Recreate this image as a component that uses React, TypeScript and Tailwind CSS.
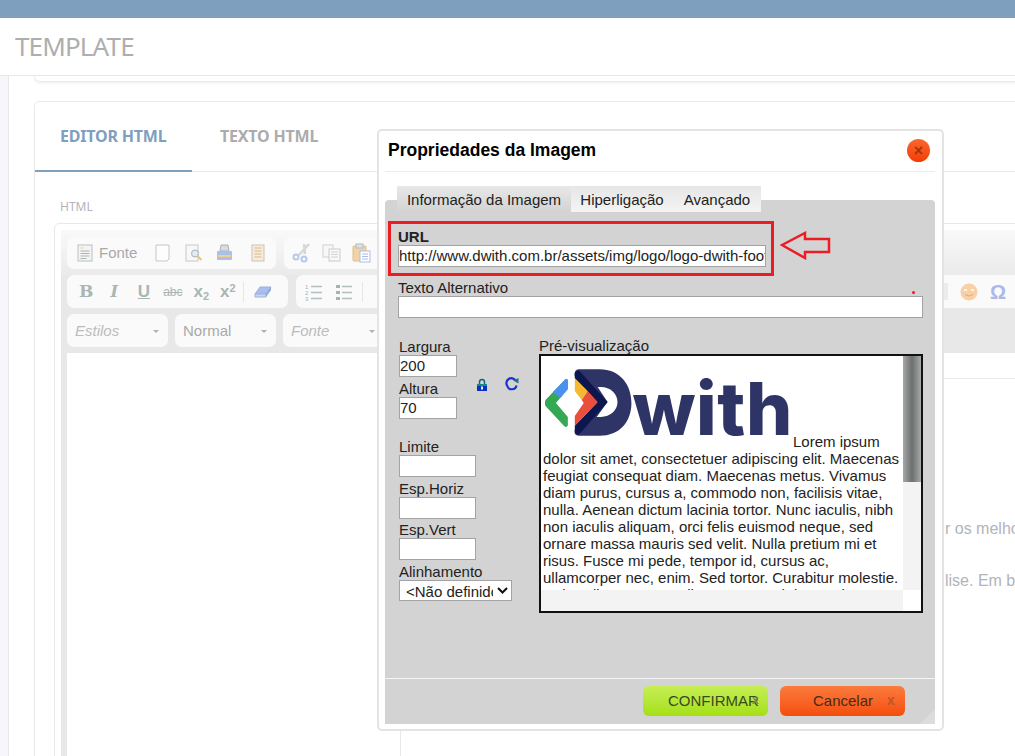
import React from 'react';

const loremText =
  'dolor sit amet, consectetuer adipiscing elit. Maecenas feugiat consequat diam. Maecenas metus. Vivamus diam purus, cursus a, commodo non, facilisis vitae, nulla. Aenean dictum lacinia tortor. Nunc iaculis, nibh non iaculis aliquam, orci felis euismod neque, sed ornare massa mauris sed velit. Nulla pretium mi et risus. Fusce mi pede, tempor id, cursus ac, ullamcorper nec, enim. Sed tortor. Curabitur molestie. Duis velit augue, condimentum at, ultrices a, luctus ut, orci.';

const Sep = () => <span className="w-px h-[20px] bg-[#e6e6e6]" />;

const DocIcon = () => (
  <svg width="16" height="18" viewBox="0 0 16 18" fill="none">
    <rect x="1" y="1" width="14" height="16" fill="#f4f4f4" stroke="#b9c0bd" />
    <path d="M3.5 4h3" stroke="#f2c987" />
    <path d="M3.5 7h9M3.5 9.500h9M3.500 12h9M3.500 14.500h6" stroke="#aeb4b4" />
  </svg>
);
const PageIcon = () => (
  <svg width="15" height="18" viewBox="0 0 15 18" fill="none">
    <path d="M1 1h13v14l-2 2H1z" fill="#fdfdfd" stroke="#c4c8c6" />
  </svg>
);
const PreviewIcon = () => (
  <svg width="19" height="18" viewBox="0 0 19 18" fill="none">
    <rect x="1" y="1" width="12" height="16" fill="#f8f8f8" stroke="#c4c8c6" />
    <circle cx="10" cy="9.500" r="3.500" fill="#e4eaf0" stroke="#a8b0b6" />
    <path d="M12.500 12l4 4" stroke="#eec27f" strokeWidth="2" />
  </svg>
);
const PrintIcon = () => (
  <svg width="17" height="18" viewBox="0 0 17 18" fill="none">
    <path d="M5 1h7l1 6H4z" fill="#d8dbe0" stroke="#aab2ba" />
    <rect x="1" y="7" width="15" height="9" rx="1" fill="#a9c0e8" />
    <rect x="2" y="11" width="13" height="2" fill="#f2cd9b" />
  </svg>
);
const TemplateIcon = () => (
  <svg width="14" height="18" viewBox="0 0 14 18" fill="none">
    <rect x="1" y="1" width="12" height="16" fill="#f6ecdc" stroke="#c9c4b6" />
    <path d="M3.500 4h7M3.500 7h7M3.500 10h7M3.500 13h7" stroke="#e0b982" />
  </svg>
);
const CutIcon = () => (
  <svg width="19" height="20" viewBox="0 0 19 20" fill="none">
    <path d="M17 1L7 12M12 1l1 10" stroke="#d4d8dc" strokeWidth="2.500" />
    <circle cx="4" cy="14" r="2.500" stroke="#b8c8ec" strokeWidth="2" />
    <circle cx="12" cy="16" r="2.500" stroke="#b8c8ec" strokeWidth="2" />
  </svg>
);
const CopyIcon = () => (
  <svg width="19" height="18" viewBox="0 0 19 18" fill="none">
    <rect x="1" y="1" width="10" height="12" fill="#f8f8f8" stroke="#d0d4d2" />
    <rect x="7" y="5" width="11" height="12" fill="#f8f8f8" stroke="#c8ccca" />
    <path d="M9 8h7M9 10.500h7M9 13h7" stroke="#d0d4d2" />
  </svg>
);
const PasteIcon = () => (
  <svg width="19" height="20" viewBox="0 0 19 20" fill="none">
    <rect x="1" y="3" width="13" height="15" rx="1" fill="#f1d3a6" stroke="#e0bd8c" />
    <rect x="4" y="1" width="7" height="4" fill="#dfe2e4" stroke="#b6bcc0" />
    <rect x="8" y="8" width="10" height="11" fill="#fff" stroke="#a9bce4" />
    <path d="M10 11h6M10 13.500h6M10 16h6" stroke="#a9bce4" />
  </svg>
);
const EraserIcon = () => (
  <svg width="18" height="12" viewBox="0 0 18 12" fill="none">
    <path d="M6 1h11l-5 7H1z" fill="#a9bfee" stroke="#9fb2dc" />
    <path d="M1 8h11v3H1z" fill="#c9d6f2" stroke="#9fb2dc" />
    <path d="M12 8l5-7v3l-5 7z" fill="#8fa6d8" />
  </svg>
);
const NumberedIcon = () => (
  <svg width="18" height="18" viewBox="0 0 18 18" fill="none">
    <text x="0" y="6" fontSize="6" fontFamily="Liberation Sans" fill="#a4b0ae">1</text>
    <text x="0" y="12" fontSize="6" fontFamily="Liberation Sans" fill="#a4b0ae">2</text>
    <text x="0" y="18" fontSize="6" fontFamily="Liberation Sans" fill="#a4b0ae">3</text>
    <path d="M6 3.500h11M6 9.500h11M6 15.500h11" stroke="#b4bebc" strokeWidth="1.500" />
  </svg>
);
const BulletIcon = () => (
  <svg width="17" height="18" viewBox="0 0 17 18" fill="none">
    <path d="M1 2h4v3H1zM1 8h4v3H1zM1 14h4v3H1z" fill="#a4b4b0" />
    <path d="M7 3.500h10M7 9.500h10M7 15.500h10" stroke="#b4bebc" strokeWidth="1.500" />
  </svg>
);
const SmileIcon = () => (
  <svg width="18" height="18" viewBox="0 0 18 18">
    <circle cx="9" cy="9" r="8.500" fill="#f9cfa6" />
    <path d="M4 7h3M11 7h3" stroke="#fff" strokeWidth="1.500" />
    <path d="M5 11.500q4 3 8 0" stroke="#e8a878" fill="none" />
  </svg>
);
const LockIcon = () => (
  <svg width="12" height="13" viewBox="0 0 12 13">
    <path d="M3.500 6V4a2.500 2.500 0 015 0v2" fill="none" stroke="#0e6c7c" strokeWidth="1.500" />
    <rect x="1" y="6" width="10" height="7" fill="#0a2fc0" />
    <rect x="1" y="6" width="10" height="2" fill="#10907c" />
    <rect x="5" y="8.500" width="2" height="3" fill="#e8eeff" />
  </svg>
);
const RefreshIcon = () => (
  <svg width="14" height="14" viewBox="0 0 14 14" fill="none">
    <path d="M10.500 3.500A4.800 4.800 0 102.200 8.800A4.800 4.800 0 0011.500 8.500" stroke="#1434d0" strokeWidth="2.200" />
    <path d="M8 3.500L13.500 1V6.500z" fill="#2d6c8c" />
  </svg>
);

const LogoMark = () => (
  <svg width="89" height="68" viewBox="0 0 89 68" fill="none">
    <path d="M0.500 31L20 10.500C22 9 23 10 23 12V20L11 34L23 48V56C23 58 21 59 19.500 57.500L0.500 37C-0.200 35.500 -0.200 33 0.500 31Z" fill="#34a853" />
    <path d="M8 23L20 10.500C22 9 23 10 23 12V20L15.500 29z" fill="#4a90f0" />
    <path d="M34 0H55C75 0 87 15 87 34C87 53 75 67 55 67H34C31 67 29 65 30 61L53 34L30 7C29 3 31 0 34 0Z" fill="#2e3566" />
    <path d="M53 18H56C66 18 73 25 73 33C73 41 66 48 56 48H52L63 33z" fill="#fff" />
    <path d="M30 5C30 2 33 1 35 2L63 33L35 65C33 67 30 65 30 62V57L53 33L30 9Z" fill="#0e1650" />
    <path d="M30 9L43 22L37 31L30 22Z" fill="#f5b82e" />
    <path d="M43 22L53 33L30 57V47L39 34L37 31Z" fill="#ea4f3c" />
  </svg>
);

const Field = ({ label, width, value }: { label: string; width: string; value?: string }) => (
  <div className="flex flex-col">
    <label className="h-[16px] leading-[16px] text-[#222]">{label}</label>
    <input
      readOnly
      value={value ?? ''}
      className={`${width} h-[22px] bg-white border border-[#a3a3a3] px-0 text-[15px] text-[#222] outline-none`}
    />
  </div>
);

export default function App() {
  return (
    <div className="relative w-[1015px] h-[756px] overflow-hidden bg-white font-['Liberation_Sans',Arial,sans-serif]">
      <div className="h-[18px] bg-[#7f9fbf]" />
      <div className="h-[58px] border-b border-[#e9e9e9] pl-[15px] flex items-center">
        <h1 className="font-['Noto_Sans',sans-serif] text-[26px] text-[#aeaeae] tracking-[-0.85px] pb-[1px]">TEMPLATE</h1>
      </div>

      <div className="flex h-[680px]">
        <div className="w-[9px] shrink-0 bg-[#f6f6fc] border-r border-[#e8e8e8]" />
        <div className="pl-[25px] w-[1150px] shrink-0">
          <div className="h-[6px] border border-t-0 border-[#ececec] rounded-b-[6px] shadow-[0_1px_3px_rgba(0,0,0,0.08)]" />

          <div className="mt-[19px] border border-[#e8e8e8] rounded-[5px] h-[700px] font-['Noto_Sans',sans-serif]">
            <div className="flex h-[70px] border-b border-[#e8e8e8]">
              <div className="w-[157px] h-[70px] border-b-[2px] border-[#7f9fbf] pl-[25px] pt-[22px] text-[16px] font-bold text-[#7f9fbf] tracking-[-0.2px]">
                EDITOR HTML
              </div>
              <div className="pl-[28px] pt-[22px] text-[16px] font-bold text-[#acacac] tracking-[-0.2px]">TEXTO HTML</div>
            </div>

            <div className="pl-[19px]">
              <div className="pl-[6px] pt-[26px] h-[51px] text-[12px] text-[#b4b4bc]">HTML</div>
              <div className="border border-[#e8e8e8] rounded-t-[5px] pl-[6px] pt-[6px] h-[600px] font-['Liberation_Sans',sans-serif]">
                <div className="bg-gradient-to-b from-[#f9f9f9] to-[#eaeaea] pl-[6px] pt-[7px] h-[45px]">
                  <div className="flex gap-[8px]">
                    <div className="w-[209px] h-[32px] bg-[#fafafa] rounded-[7px] flex items-center pl-[10px]">
                      <DocIcon />
                      <span className="ml-[6px] text-[15px] text-[#a9a9a9]">Fonte</span>
                      <span className="ml-[8px]"><Sep /></span>
                      <span className="ml-[10px] flex"><PageIcon /></span>
                      <span className="ml-[15px] flex"><PreviewIcon /></span>
                      <span className="ml-[12px] flex"><PrintIcon /></span>
                      <span className="ml-[8px]"><Sep /></span>
                      <span className="ml-[10px] flex"><TemplateIcon /></span>
                    </div>
                    <div className="w-[300px] h-[32px] bg-[#fafafa] rounded-[7px] flex items-center pl-[8px] gap-[11px]">
                      <CutIcon />
                      <CopyIcon />
                      <PasteIcon />
                    </div>
                  </div>
                </div>

                <div className="bg-[#e8e8e8] pl-[6px]">
                  <div className="flex gap-[8px] h-[33px]">
                    <div className="w-[221px] bg-[#fafafa] rounded-[7px] flex items-center pl-[12px] text-[#a9b6b4] font-bold">
                      <span className="font-['DejaVu_Serif',serif] text-[17px] leading-none">B</span>
                      <span className="ml-[17px] font-['DejaVu_Serif',serif] text-[16px] italic leading-none">I</span>
                      <span className="ml-[20px] underline text-[17px] leading-none">U</span>
                      <span className="ml-[13px] text-[12px] font-normal line-through">abc</span>
                      <span className="ml-[11px] text-[17px] leading-none">x<sub className="text-[11px]">2</sub></span>
                      <span className="ml-[11px] text-[17px] leading-none">x<sup className="text-[11px]">2</sup></span>
                      <span className="ml-[7px] flex"><Sep /></span>
                      <span className="ml-[10px] flex"><EraserIcon /></span>
                    </div>
                    <div className="w-[800px] bg-[#fafafa] rounded-l-[7px] flex items-center pl-[9px]">
                      <NumberedIcon />
                      <span className="ml-[12px] flex"><BulletIcon /></span>
                      <span className="ml-[10px] flex"><Sep /></span>
                      <span className="ml-[581px] w-[4px] h-[17px] bg-[#ececec]" />
                      <span className="ml-[12px] flex"><SmileIcon /></span>
                      <span className="ml-[12px] text-[20px] leading-none font-bold text-[#aab8ea]">Ω</span>
                    </div>
                  </div>

                  <div className="flex gap-[7px] pt-[6px] pb-[6px] text-[15px] text-[#bcbcbc]">
                    <div className="w-[101px] h-[33px] bg-[#fafafa] rounded-[7px] flex items-center justify-between pl-[8px] pr-[9px] pt-[2px] italic">
                      Estilos<span className="w-0 h-0 border-x-[3px] border-x-transparent border-t-[3px] border-t-[#b0b0b0]" />
                    </div>
                    <div className="w-[101px] h-[33px] bg-[#fafafa] rounded-[7px] flex items-center justify-between pl-[8px] pr-[9px] pt-[2px] text-[#a9a9a9]">
                      Normal<span className="w-0 h-0 border-x-[3px] border-x-transparent border-t-[3px] border-t-[#b0b0b0]" />
                    </div>
                    <div className="w-[101px] h-[33px] bg-[#fafafa] rounded-[7px] flex items-center justify-between pl-[8px] pr-[9px] pt-[2px] italic">
                      Fonte<span className="w-0 h-0 border-x-[3px] border-x-transparent border-t-[3px] border-t-[#b0b0b0]" />
                    </div>
                  </div>
                </div>

                <div className="flex bg-[#e8e8e8] pl-[6px] h-[420px]">
                  <div className="w-[334px] bg-white border-r border-[#e8e8e8]" />
                  <div className="flex-1 bg-white">
                    <div className="h-[26px] border-b border-[#e8e8e8]" />
                    <div className="pl-[544px] pt-[138px] whitespace-nowrap text-[16px] text-[#b0b4bc]">
                      <p className="h-[52px]">r os melhores</p>
                      <p>lise. Em breve</p>
                    </div>
                  </div>
                </div>
              </div>
            </div>
          </div>
        </div>
      </div>

      {/* image dialog */}
      <div className="absolute left-[377px] top-[129px] w-[567px] h-[602px] bg-white border-2 border-[#e4e4e4] rounded-[5px] pl-[6px] pr-[7px] pb-[5px] flex flex-col text-[15px] text-[#222]">
        <div className="h-[41px] shrink-0 border-b border-[#ececec] flex items-center justify-between pl-[3px] pr-[5px] pb-[1px]">
          <h2 className="text-[17.5px] font-bold text-black">Propriedades da Imagem</h2>
          <button className="w-[23px] h-[23px] rounded-full bg-gradient-to-b from-[#f9672c] to-[#f23c00] text-[#a83208] text-[16px] font-bold leading-none">×</button>
        </div>

        <div className="relative z-10 flex mt-[14px] -mb-[12px] ml-[12px] h-[26px] shrink-0">
          <div className="w-[174px] bg-gradient-to-b from-[#e8e8e8] to-[#d3d3d3] text-center leading-[28px] text-[#222]">Informação da Imagem</div>
          <div className="w-[102px] bg-gradient-to-b from-[#e6e6e6] to-[#f4f4f4] text-center leading-[28px]">Hiperligação</div>
          <div className="w-[88px] bg-gradient-to-b from-[#e6e6e6] to-[#f4f4f4] text-center leading-[28px]">Avançado</div>
        </div>

        <div className="relative flex-1 bg-[#d3d3d3] rounded-t-[4px] flex flex-col">
          <div className="flex-1 pt-[21px]">
            <div className="ml-[3px] w-[386px] h-[55px] border-[3px] border-[#ed1c24] pl-[7px] flex flex-col">
              <label className="h-[21px] pt-[4px] leading-[17px] font-bold text-[#222]">URL</label>
              <input
                readOnly
                value="http://www.dwith.com.br/assets/img/logo/logo-dwith-footer.png"
                className="w-[368px] h-[22px] bg-white border border-[#a3a3a3] px-0 text-[15px] text-[#222] outline-none"
              />
            </div>

            <div className="ml-[13px] mt-[4px] flex flex-col">
              <label className="h-[16px] leading-[16px]">Texto Alternativo</label>
              <input readOnly value="" className="w-[525px] h-[22px] bg-white border border-[#a3a3a3] outline-none" />
            </div>

            <div className="flex ml-[14px] mt-[21px]">
              <div className="w-[140px] shrink-0">
                <div className="flex">
                  <div className="flex flex-col gap-[4px]">
                    <Field label="Largura" width="w-[58px]" value="200" />
                    <Field label="Altura" width="w-[58px]" value="70" />
                  </div>
                  <span className="ml-[19px] mt-[39px] self-start"><LockIcon /></span>
                  <span className="ml-[17px] mt-[38px] self-start"><RefreshIcon /></span>
                </div>
                <div className="mt-[20px] flex flex-col gap-[4px]">
                  <Field label="Limite" width="w-[77px]" />
                  <Field label="Esp.Horiz" width="w-[77px]" />
                  <div className="-mt-px"><Field label="Esp.Vert" width="w-[77px]" /></div>
                </div>
                <div className="mt-[4px] flex flex-col">
                  <label className="h-[16px] leading-[16px]">Alinhamento</label>
                  <div className="relative w-[113px] h-[21px]">
                    <select className="appearance-none w-full h-full bg-white border border-[#a3a3a3] pl-[6px] pr-[18px] text-[15px] text-[#222] outline-none">
                      <option>&lt;Não definido&gt;</option>
                    </select>
                    <svg className="absolute right-[4px] top-[7px]" width="11" height="7" viewBox="0 0 11 7" fill="none">
                      <path d="M1 1l4.500 4.500L10 1" stroke="#111" strokeWidth="2" />
                    </svg>
                  </div>
                </div>
              </div>

              <div className="-mt-px">
                <div className="h-[16px] leading-[16px]">Pré-visualização</div>
                <div className="w-[384px] h-[259px] border-2 border-[#111] bg-white flex flex-col">
                  <div className="flex h-[234px]">
                    <div className="w-[362px] overflow-hidden pl-[2px] text-[15px] leading-[17px] text-[#222]">
                      <div className="inline-block overflow-hidden w-[250px] h-[91px] align-baseline">
                        <div className="flex items-end pl-[2px] pt-[13px]">
                          <LogoMark />
                          <span className="font-['Inter',sans-serif] font-extrabold text-[73px] leading-[56px] tracking-[0.6px] -ml-[1px] text-[#2e3566]">with</span>
                        </div>
                      </div>
                      Lorem ipsum {loremText}
                    </div>
                    <div className="w-[18px] bg-[#f3f3f3]">
                      <div className="h-[126px] bg-gradient-to-r from-[#a8a8a8] via-[#6d7070] to-[#a8a8a8]" />
                    </div>
                  </div>
                  <div className="flex flex-1">
                    <div className="w-[362px] bg-[#f3f3f3]" />
                  </div>
                </div>
              </div>
            </div>
          </div>

          <div className="h-[46px] shrink-0 border-t border-[#f4f4f4] flex justify-end gap-[12px] pt-[7px] pr-[30px]">
            <button className="relative w-[125px] h-[30px] rounded-[6px] bg-gradient-to-b from-[#c6ee52] to-[#a4e00c] text-[15px] text-[#3a4a20] pl-[25px] text-left">
              CONFIRMAR
              <span className="absolute left-[109px] top-[8px] text-[12px] font-bold leading-none text-[#7f8f50]">x</span>
            </button>
            <button className="relative w-[125px] h-[30px] rounded-[6px] bg-gradient-to-b from-[#fb7b3b] to-[#f44d08] text-[15px] text-[#4a2a18] pl-[33px] text-left">
              Cancelar
              <span className="absolute left-[107px] top-[7px] text-[14px] font-bold leading-none text-[#c2542a]">x</span>
            </button>
          </div>

          <svg className="absolute right-0 bottom-0" width="15" height="15" viewBox="0 0 15 15">
            <path d="M15 0V15H0z" fill="#dcdcdc" />
          </svg>
        </div>

        <span className="absolute left-[533px] top-[160px] w-[3px] h-[3px] rounded-full bg-[#ed1c24]" />
      </div>

      {/* annotation arrow */}
      <svg className="absolute left-[780px] top-[231px]" width="51" height="29" viewBox="0 0 51 29" fill="none">
        <path d="M2 14L25 2V8H49V21H25V27z" stroke="#ed1c24" strokeWidth="2.500" />
      </svg>
    </div>
  );
}
